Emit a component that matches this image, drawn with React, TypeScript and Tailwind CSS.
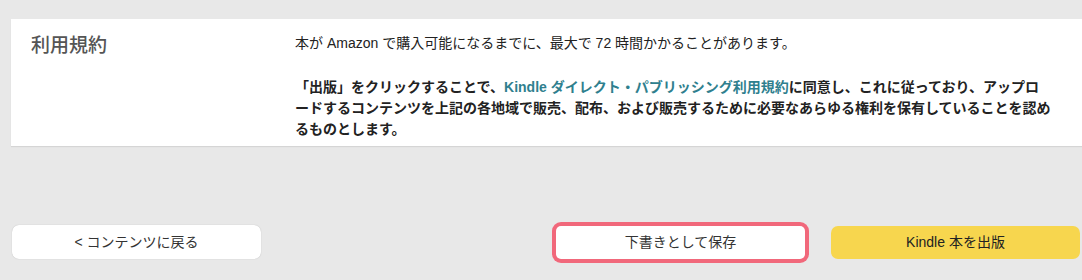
const font = { fontFamily: '"Liberation Sans", "Noto Sans CJK JP", sans-serif' }

function TermsCard() {
  return (
    <div className="flex bg-white pt-[14px] pb-[6px] shadow-[0_1px_1px_rgba(0,0,0,0.08)]">
      <div className="w-[284px] flex-shrink-0 pl-5">
        <h2 className="text-[19px] font-medium leading-[26px] text-[#555]">利用規約</h2>
      </div>
      <div className="w-[780px] text-[14px] leading-[21px] text-[#222]">
        <p>本が Amazon で購入可能になるまでに、最大で 72 時間かかることがあります。</p>
        <p className="mt-[23px] font-bold">
          「出版」をクリックすることで、
          <a href="#" className="text-[#2f7f8e]">
            Kindle ダイレクト・パブリッシング利用規約
          </a>
          に同意し、これに従っており、アップロ
          <br />
          ードするコンテンツを上記の各地域で販売、配布、および販売するために必要なあらゆる権利を保有していることを認め
          <br />
          るものとします。
        </p>
      </div>
    </div>
  )
}

export default function App() {
  return (
    <div className="h-[280px] overflow-hidden bg-[#e8e8e8] pl-[11px] pt-[19px]" style={font}>
      <TermsCard />
      <div className="mt-[79px] flex items-center justify-between pr-[2px]">
        <button
          type="button"
          className="ml-px h-[34px] w-[249px] rounded-[7px] bg-white text-[14px] text-[#333] shadow-[0_0_1px_rgba(0,0,0,0.25)]"
        >
          &lt; コンテンツに戻る
        </button>
        <div className="flex items-center gap-[26px]">
          <button
            type="button"
            className="h-[33px] w-[249px] rounded-[5px] bg-white text-[14px] text-[#333] ring-4 ring-[#f1687b]"
          >
            下書きとして保存
          </button>
          <button
            type="button"
            className="h-[33px] w-[249px] rounded-[7px] bg-[#f7d64e] text-[14px] text-[#222]"
          >
            Kindle 本を出版
          </button>
        </div>
      </div>
    </div>
  )
}
